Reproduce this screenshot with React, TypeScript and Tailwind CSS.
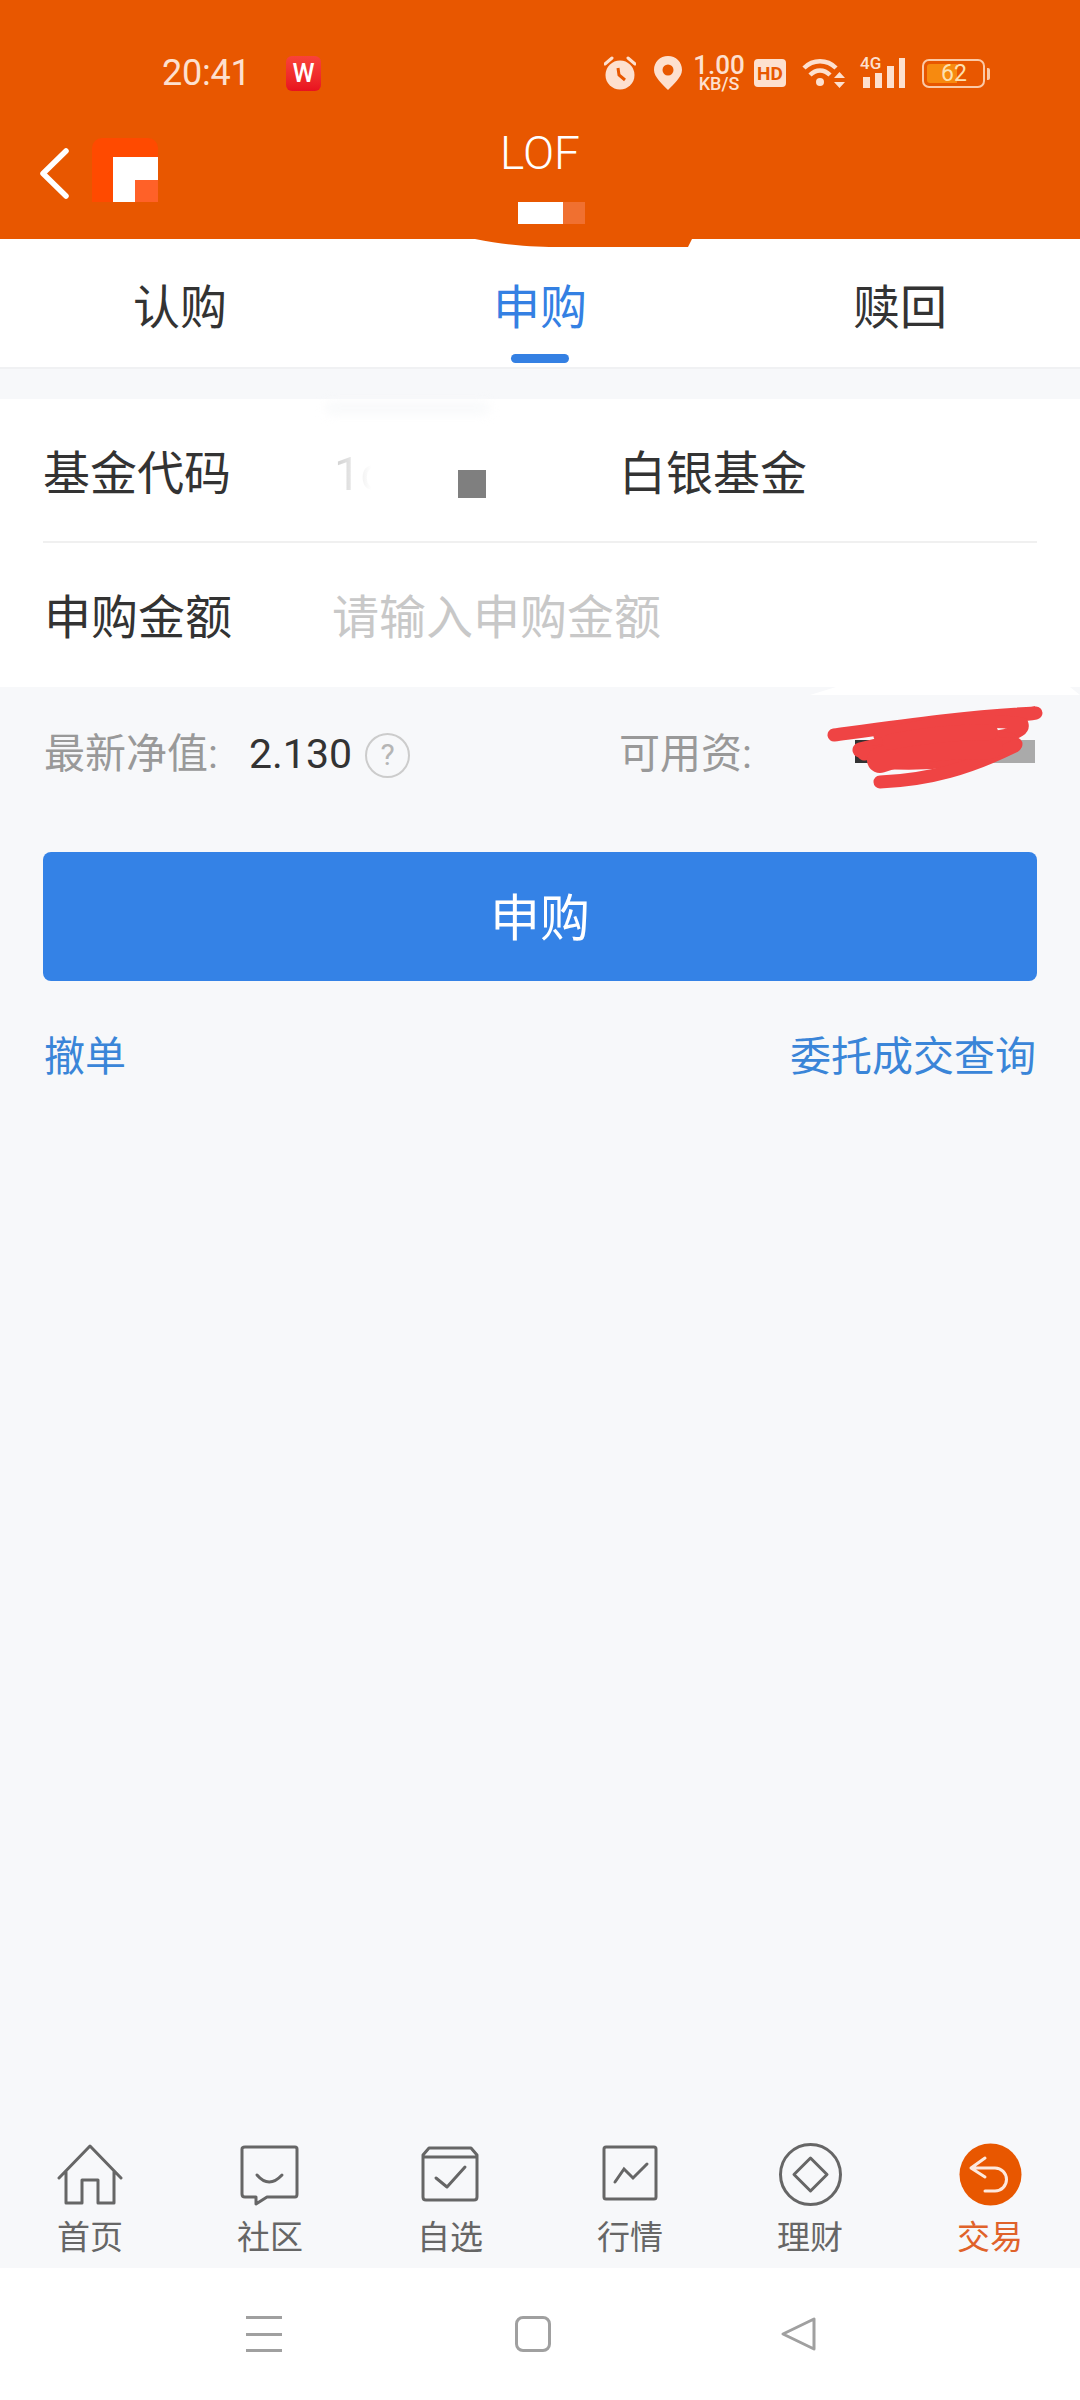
const statusColor = '#fde0cf';

function StatusBar() {
  return (
    <div className="flex h-[36px] items-center pl-[162px] pr-[95px] text-[#fde0cf]">
      <span className="w-[87px] text-[36px] leading-none tracking-[-0.2px]">20:41</span>
      <div className="ml-[37px] flex h-[35px] w-[35px] items-center justify-center rounded-[6px] bg-gradient-to-b from-[#f9423a] to-[#e8101f] text-[25px] font-medium leading-none text-white">
        W
      </div>
      <div className="ml-auto flex items-center">
        <svg width="32" height="34" viewBox="0 0 32 34">
          <circle cx="16" cy="19" r="14.5" fill={statusColor} />
          <path d="M1 8 L8 2 M31 8 L24 2" stroke={statusColor} strokeWidth="3" strokeLinecap="round" />
          <path d="M14 12 L15 19 L21 24" stroke="#e85700" strokeWidth="3" fill="none" />
        </svg>
        <svg className="ml-[18px]" width="28" height="34" viewBox="0 0 28 34">
          <path d="M14 0 C6 0 0 6 0 14 C0 21 9 29 14 34 C19 29 28 21 28 14 C28 6 22 0 14 0 Z" fill={statusColor} />
          <circle cx="14" cy="14" r="5.5" fill="#e85700" />
        </svg>
        <div className="ml-[13px] flex w-[48px] flex-col items-center font-medium leading-none">
          <span className="text-[26px] leading-[21px]">1.00</span>
          <span className="text-[18px] leading-[15px]">KB/S</span>
        </div>
        <div className="ml-[11px] flex h-[28px] w-[32px] items-center justify-center rounded-[4px] bg-[#fde0cf] text-[19px] font-bold leading-none text-[#e85700]">
          HD
        </div>
        <svg className="ml-[16px]" width="44" height="32" viewBox="0 0 44 32">
          <path d="M2 11 C11 2 25 2 34 11 M8 18 C14 12 22 12 28 18" stroke={statusColor} strokeWidth="4.5" fill="none" />
          <circle cx="18" cy="25" r="4" fill={statusColor} />
          <path d="M33 20 H44 L38.5 14 Z M33 24 H44 L38.5 30 Z" fill={statusColor} transform="translate(-1 1)" />
        </svg>
        <div className="relative ml-[14px] h-[32px] w-[46px]">
          <span className="absolute left-0 top-[-2px] text-[17px] font-medium leading-none">4G</span>
          <svg className="absolute left-0 top-0" width="46" height="32" viewBox="0 0 46 32">
            <rect x="3" y="20" width="7" height="11" fill={statusColor} />
            <rect x="15" y="16" width="7" height="15" fill={statusColor} />
            <rect x="27" y="9" width="7" height="22" fill={statusColor} />
            <rect x="39" y="1" width="6" height="30" fill={statusColor} />
          </svg>
        </div>
        <div className="relative ml-[16px] flex h-[29px] w-[63px] items-center rounded-[7px] border-2 border-[#fbc9a6] p-[3px]">
          <div className="h-full w-[30px] rounded-l-[3px] bg-[#f78a0f]" />
          <span className="absolute left-[17px] top-[1px] text-[23px] leading-[24px] text-[#fde0b0]">62</span>
          <div className="absolute right-[-7px] top-[7px] h-[12px] w-[3px] rounded-r-[2px] bg-[#fbc9a6]" />
        </div>
      </div>
    </div>
  );
}

function Header() {
  return (
    <header className="relative h-[239px] shrink-0 bg-[#e85700] pt-[55px]">
      <StatusBar />
      <div className="mt-[37px] grid grid-cols-3">
        <div className="flex items-start pl-[40px] pt-[10px]">
          <svg className="mt-[10px]" width="29" height="51" viewBox="0 0 29 51">
            <path d="M26 3 L3 25.5 L26 48" stroke="#fff" strokeWidth="5.5" fill="none" strokeLinecap="round" strokeLinejoin="round" />
          </svg>
          <div className="relative ml-[23px] h-[64px] w-[66px] rounded-t-[10px] bg-[#ff4a00]">
            <div className="absolute bottom-0 right-0 h-[45px] w-[45px] bg-white" />
            <div className="absolute bottom-0 right-0 h-[22px] w-[23px] bg-[#ff6128]" />
          </div>
        </div>
        <div className="flex flex-col items-center">
          <span className="h-[50px] pt-[1px] text-[46px] font-light leading-[48px] text-white">LOF</span>
          <div className="ml-[23px] mt-[24px] flex h-[22px]">
            <div className="w-[45px] bg-white" />
            <div className="w-[22px] bg-[#f07030]" />
          </div>
        </div>
      </div>
      {/* 标题下方的涂抹痕迹 */}
      <svg className="absolute left-[470px] top-[239px]" width="224" height="9" viewBox="0 0 224 9">
        <path d="M5 0 C40 7 70 8 90 8 L218 8 L222 0 Z" fill="#e85700" />
      </svg>
    </header>
  );
}

function Tab({ label, active }: { label: string; active?: boolean }) {
  return (
    <div className="flex flex-col items-center pt-[42px]">
      <span className={`text-[47px] leading-[54px] ${active ? 'text-[#3480e3]' : 'text-[#333333]'}`}>{label}</span>
      {active && <div className="mt-[19px] h-[9px] w-[58px] rounded-full bg-[#3480e3]" />}
    </div>
  );
}

function NavIcon({ name }: { name: string }) {
  const stroke = { stroke: '#666666', strokeWidth: 3, fill: 'none', strokeLinejoin: 'round' as const, strokeLinecap: 'round' as const };
  if (name === 'home') {
    return (
      <svg width="66" height="63" viewBox="0 0 66 63">
        <path d="M2 35 L33 3 L64 35 M9 28 V60 H25 V37 H41 V60 H57 V28" {...stroke} />
      </svg>
    );
  }
  if (name === 'chat') {
    return (
      <svg width="60" height="63" viewBox="0 0 60 63">
        <path d="M5 4 H55 Q57 4 57 6 V51 Q57 54 55 54 H27 L16 61 V54 H5 Q2 54 2 51 V6 Q2 4 5 4 Z" {...stroke} />
        <path d="M17 32 Q29 46 42 32" {...stroke} />
      </svg>
    );
  }
  if (name === 'box') {
    return (
      <svg width="58" height="63" viewBox="0 0 58 63">
        <path d="M2 12 L8 5 H50 L56 12 V54 Q56 57 53 57 H5 Q2 57 2 54 Z M2 14 H56" {...stroke} />
        <path d="M15 35 L26 44 L44 24" {...stroke} />
      </svg>
    );
  }
  if (name === 'trend') {
    return (
      <svg width="56" height="63" viewBox="0 0 56 63">
        <rect x="2" y="4" width="52" height="52" rx="2" {...stroke} />
        <path d="M13 39 L22 26 L31 35 L45 21" {...stroke} strokeLinejoin="miter" />
      </svg>
    );
  }
  if (name === 'diamond') {
    return (
      <svg width="63" height="63" viewBox="0 0 63 63">
        <circle cx="31.5" cy="31.5" r="30" {...stroke} />
        <path d="M31.5 15 L48 31.5 L31.5 48 L15 31.5 Z" {...stroke} />
      </svg>
    );
  }
  return (
    <svg width="63" height="63" viewBox="0 0 63 63">
      <circle cx="31.5" cy="31.5" r="31" fill="#e85700" />
      <path d="M12 25 H36 A11.5 11.5 0 0 1 36 48 H26 M26 15 L12 25 L26 34" stroke="#fde9dd" strokeWidth="3" fill="none" strokeLinecap="round" strokeLinejoin="round" />
    </svg>
  );
}

const navItems = [
  { name: 'home', label: '首页' },
  { name: 'chat', label: '社区' },
  { name: 'box', label: '自选' },
  { name: 'trend', label: '行情' },
  { name: 'diamond', label: '理财' },
  { name: 'trade', label: '交易' },
];

export default function App() {
  return (
    <div className="relative flex h-[2400px] w-[1080px] flex-col overflow-hidden bg-[#f7f8fa] font-['Roboto','Noto_Sans_CJK_SC',sans-serif]">
      <Header />

      <div className="grid h-[130px] shrink-0 grid-cols-3 border-b-2 border-[#f0f1f3] bg-white">
        <Tab label="认购" />
        <Tab label="申购" active />
        <Tab label="赎回" />
      </div>

      <section className="mt-[30px] shrink-0 bg-white text-[47px] text-[#333333]">
        <div className="mx-[43px] flex h-[144px] items-center border-b-2 border-[#f0f0f0] pt-[8px]">
          <span className="w-[291px]">基金代码</span>
          <span className="w-[288px] bg-gradient-to-r from-[#cfcfcf] to-[#ffffff] to-[13%] bg-clip-text text-transparent">1c</span>
          <span className="-ml-[3px]">白银基金</span>
        </div>
        <div className="mx-[43px] flex h-[144px] items-center pt-[6px]">
          <span className="ml-px w-[289px]">申购金额</span>
          <span className="-ml-px text-[#c8c8c8]">请输入申购金额</span>
        </div>
      </section>

      <div className="flex h-[130px] shrink-0 items-center px-[44px] pt-[6px] text-[41px] text-[#999999]">
        <span className="w-[205px]">最新净值:</span>
        <span className="text-[#333333]">2.130</span>
        <div className="ml-[13px] flex h-[45px] w-[45px] items-center justify-center rounded-full border-2 border-[#cccccc] text-[30px] leading-none text-[#b5b5b5]">
          ?
        </div>
        <span className="ml-[209px] whitespace-nowrap">可用资:</span>
      </div>

      <div className="mx-[43px] mt-[35px] flex h-[129px] shrink-0 items-center justify-center rounded-[8px] bg-[#3482e6] pt-[6px] text-[50px] text-white">
        申购
      </div>

      <div className="mx-[44px] mt-[44px] flex h-[60px] shrink-0 items-center justify-between pt-[5px] text-[41px] text-[#3a85d8]">
        <span>撤单</span>
        <span>委托成交查询</span>
      </div>

      <div className="flex-1" />

      <nav className="grid h-[125px] shrink-0 grid-cols-6">
        {navItems.map((item) => (
          <div key={item.name} className="flex flex-col items-center">
            <div className="flex h-[63px] items-center justify-center">
              <NavIcon name={item.name} />
            </div>
            <span className={`mt-[10px] text-[33px] leading-[44px] ${item.name === 'trade' ? 'text-[#e0622a]' : 'text-[#666666]'}`}>
              {item.label}
            </span>
          </div>
        ))}
      </nav>

      <div className="flex h-[132px] shrink-0 items-center bg-white pl-[246px]">
        <div className="flex h-[36px] w-[36px] flex-col justify-between">
          <div className="h-[3px] bg-[#a0a0a0]" />
          <div className="h-[3px] bg-[#a0a0a0]" />
          <div className="h-[3px] bg-[#a0a0a0]" />
        </div>
        <div className="ml-[233px] h-[36px] w-[36px] rounded-[8px] border-[3px] border-[#a0a0a0]" />
        <svg className="ml-[229px]" width="37" height="36" viewBox="0 0 37 36">
          <path d="M34 3 V33 L3 18 Z" stroke="#a0a0a0" strokeWidth="3" fill="none" strokeLinejoin="round" />
        </svg>
      </div>

      {/* 截图上的打码和涂抹 */}
      <div className="absolute left-[325px] top-[401px] h-[14px] w-[165px] rounded-full bg-[#f9fafb] blur-[5px]" />
      <div className="absolute left-[458px] top-[470px] h-[28px] w-[28px] bg-[#7f7f7f]" />
      <svg className="absolute left-[800px] top-[687px]" width="280" height="8" viewBox="0 0 280 8">
        <path d="M10 8 L36 0 H270 L280 8 Z" fill="#ffffff" />
      </svg>
      <div className="absolute left-[752px] top-[730px] h-[50px] w-[20px] bg-[#f7f8fa]" />
      <div className="absolute left-[855px] top-[740px] flex h-[23px] w-[180px]">
        <div className="w-[60px] bg-[#333333]" />
        <div className="flex-1 bg-[#aaaaaa]" />
      </div>
      <svg className="absolute left-[820px] top-[700px]" width="230" height="90" viewBox="0 0 230 90">
        <g stroke="#ef4444" fill="none" strokeWidth="13" strokeLinecap="round" strokeLinejoin="round">
          <path d="M14 35 C80 26 150 16 216 13 C170 20 120 24 70 36" />
          <path d="M60 36 C110 22 165 18 202 24 C205 34 180 38 130 42" />
          <path d="M40 50 C90 36 160 34 190 40" strokeWidth="15" />
          <path d="M44 54 C100 44 150 44 196 44 C160 60 110 66 58 62" />
          <path d="M60 82 C110 80 150 68 195 46" />
          <path d="M60 60 C100 46 140 46 170 46" strokeWidth="26" />
          <path d="M70 42 C110 34 140 32 170 32" strokeWidth="16" />
        </g>
      </svg>
    </div>
  );
}
